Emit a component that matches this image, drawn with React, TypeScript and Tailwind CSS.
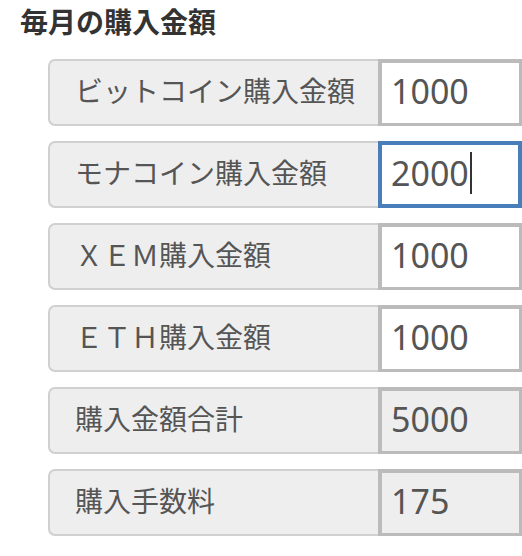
import type React from "react";

interface Row {
  label: string;
  value: string;
  focused?: boolean;
  readOnly?: boolean;
}

const rows: Row[] = [
  { label: "ビットコイン購入金額", value: "1000" },
  { label: "モナコイン購入金額", value: "2000", focused: true },
  { label: "ＸＥＭ購入金額", value: "1000" },
  { label: "ＥＴＨ購入金額", value: "1000" },
  { label: "購入金額合計", value: "5000", readOnly: true },
  { label: "購入手数料", value: "175", readOnly: true },
];

const font = { fontFamily: '"Noto Sans", "Noto Sans CJK JP", sans-serif' };

const InputRow: React.FC<{ row: Row }> = ({ row }) => {
  const boxClass = row.focused
    ? "border-4 border-[#4a7ebb] bg-white"
    : row.readOnly
      ? "border-[3px] border-t-4 border-l-4 border-[#bbb] bg-[#eee]"
      : "border-[3px] border-t-4 border-l-4 border-[#bbb] bg-white";

  return (
    <div className="flex h-[67px]">
      <div className="flex w-[330px] shrink-0 items-center rounded-l-[7px] border-2 border-r-0 border-[#d0d0d0] bg-[#eee] pb-[3px] pl-[25px] text-[28px] text-[#555]">
        {row.label}
      </div>
      <div className={`flex flex-1 items-center pb-[3px] pl-[9px] text-[34px] text-[#555] ${boxClass}`}>
        <span>{row.value}</span>
        {row.focused && <span className="ml-[1px] h-[42px] w-[2px] bg-[#333]" />}
      </div>
    </div>
  );
};

export default function App() {
  return (
    <div className="h-[556px] w-[522px] overflow-hidden bg-white" style={font}>
      <h2 className="pl-[20px] pt-[4px] text-[28px] font-bold leading-[36px] text-[#333]">
        毎月の購入金額
      </h2>
      <div className="ml-[48px] mt-[19px] flex flex-col gap-[15px]">
        {rows.map((row) => (
          <InputRow key={row.label} row={row} />
        ))}
      </div>
    </div>
  );
}
